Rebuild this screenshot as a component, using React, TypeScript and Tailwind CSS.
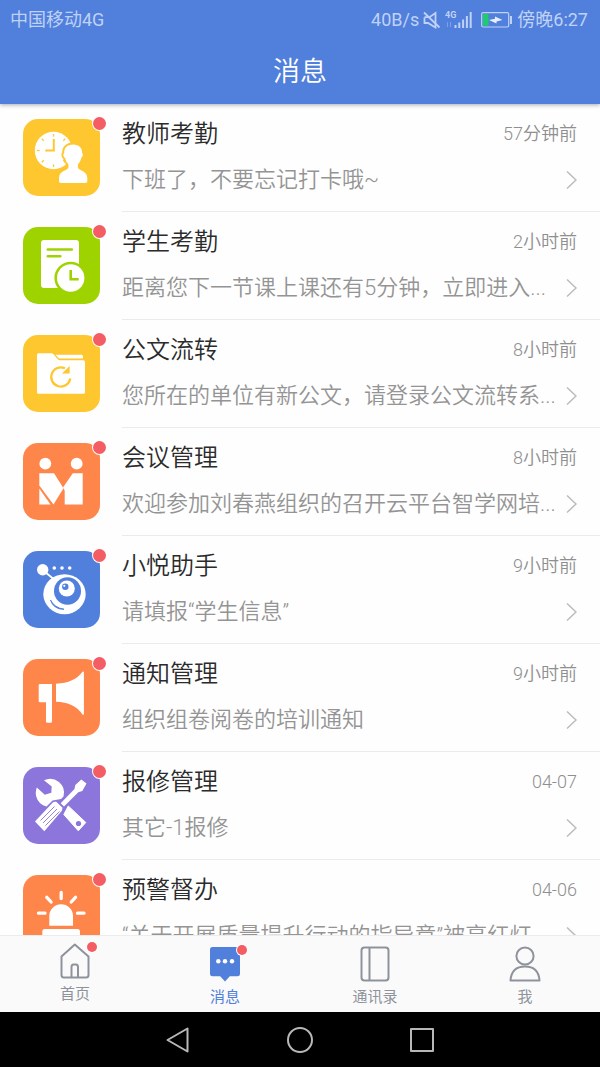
import { useState } from "react";
import type { ReactNode } from "react";

type Message = {
  id: string;
  title: string;
  desc: string;
  time: string;
  color: string;
  icon: ReactNode;
};

const TICKS = [0, 45, 90, 135, 180, 225, 270, 315];

// App icons, all drawn on a 77x77 tile
const TeacherIcon = () => (
  <svg viewBox="0 0 77 77" className="h-full w-full" fill="#fff">
    <circle cx="30.5" cy="31.5" r="18.7" />
    {TICKS.map((a) => (
      <path key={a} d="M30.5 15v2.6" stroke="#fec62f" strokeWidth="1.3" transform={`rotate(${a} 30.5 31.5)`} />
    ))}
    <path d="M30.8 20v11.5h-8.5" fill="none" stroke="#fec62f" strokeWidth="2" />
    <path
      d="M50 25.5c-6 0-9 3.500-8.800 8.500-1.500 1-.8 4 .8 4.800.6 3 1.800 5 3.400 6.500v3.700c-1.500 2.500-9.400 3-9.400 10v3.300c0 1.200.8 1.700 2 1.700h24.300c1.200 0 2-.5 2-1.700V59c0-7-8-7.500-9.400-10v-3.700c1.600-1.500 2.800-3.500 3.400-6.500 1.600-.8 2.200-3.800.8-4.800.2-5-3-8.500-9.100-8.500z"
      stroke="#fec62f"
      strokeWidth="4"
      paintOrder="stroke"
    />
  </svg>
);

const StudentIcon = () => (
  <svg viewBox="0 0 77 77" className="h-full w-full" fill="#fff">
    <rect x="18" y="13" width="38" height="48" rx="3" />
    <path d="M24.800 22.500h24M24.800 29.300h12.500" stroke="#9fd300" strokeWidth="2.600" strokeLinecap="round" />
    <circle cx="47.700" cy="51" r="16.300" fill="#9fd300" />
    <circle cx="47.700" cy="51" r="13.700" />
    <path d="M47.700 43v9.300h8" fill="none" stroke="#9fd300" strokeWidth="2.600" />
  </svg>
);

const DocumentIcon = () => (
  <svg viewBox="0 0 77 77" className="h-full w-full" fill="#fff">
    <path d="M15.500 18.300h13.200q1 0 1.800 1l4.500 5.200q.8.800 2 .8h23.500q1.500 0 1.500 1.500v30.400q0 1.500-1.500 1.500h-45q-1.500 0-1.500-1.500V19.800q0-1.500 1.500-1.500z" />
    <path d="M32.500 19.700h26q1.500 0 1.500 1.500v2.300H36.800q-1 0-1.600-.7z" />
    <path d="M47.300 43.500a9.600 9.600 0 1 1-5.300-10.200" fill="none" stroke="#fec62f" strokeWidth="2.200" />
    <path d="M46.600 31v7.500h-7.600z" fill="#fec62f" />
  </svg>
);

const MeetingIcon = () => (
  <svg viewBox="0 0 77 77" className="h-full w-full" fill="#fff">
    <circle cx="22.300" cy="20.700" r="5.900" />
    <circle cx="53.700" cy="20.700" r="5.900" />
    <path d="M16.300 30.300H31l9.500 15L30.500 61.500 16.300 42.500z" />
    <path d="M16.300 45.500v16h11.200z" />
    <path d="M49.800 30.300h9.900v31.200H41.700V47.500L40 44.500z" />
  </svg>
);

const AssistantIcon = () => (
  <svg viewBox="0 0 77 77" className="h-full w-full" fill="#fff">
    <circle cx="19.700" cy="18.700" r="5.700" />
    <path d="M22 21l8 6.500" stroke="#fff" strokeWidth="1.800" />
    <circle cx="31.300" cy="17" r="1.800" />
    <circle cx="39" cy="17" r="1.800" />
    <circle cx="46.700" cy="17" r="1.800" />
    <ellipse cx="41.500" cy="43.200" rx="21.200" ry="20" />
    <ellipse cx="44.500" cy="40" rx="13.500" ry="13.700" fill="#517fdc" />
    <circle cx="43.800" cy="37.500" r="8" />
    <circle cx="42.300" cy="35.700" r="3.200" fill="#517fdc" />
    <circle cx="41.300" cy="34.800" r="1.100" />
    <path d="M27.500 49q3.500 7.500 13.500 9.300Q30.500 58.500 27.500 49z" fill="#517fdc" stroke="#517fdc" strokeWidth=".9" />
  </svg>
);

const NoticeIcon = () => (
  <svg viewBox="0 0 77 77" className="h-full w-full" fill="#fff">
    <path d="M17 25h12v37.500q0 1.200-1.200 1.200h-3.600q-1.200 0-1.200-1.200V43.300h-6q-1.300 0-1.300-1.300V26.300Q15.700 25 17 25z" />
    <path d="M33 24.700Q51.500 24 59.500 12.800q1.400-1 1.400.8v41.200q0 1.800-1.400.8Q51.500 43 33 42.700z" />
  </svg>
);

const RepairIcon = () => (
  <svg viewBox="0 0 77 77" className="h-full w-full" fill="#fff">
    <path d="M21 13.200A14 14 0 0 1 40.500 29.500L38 32 29.500 33.500 23.500 39.500A14 14 0 0 1 13.800 20.500l8 7.300 6.500-2 .4-6.300z" />
    <path d="M45.300 39l17.500 16.500-7.500 8.300L40.800 47.500z" strokeLinejoin="round" stroke="#fff" />
    <circle cx="55.500" cy="56.500" r="2.600" fill="#8c76dc" />
    <path d="M58.300 12.500l5.200 4-4.200 7.500-4 1.300L41 39.500l-3.300-3.200L51.500 22l.8-4z" />
    <path d="M30 35.300l3-.8 6.500 6.300-.6 3L21.300 64.300 12 54.500z" />
    <path d="M17.500 53.500l14-14M20 56l14-14M22.500 58.500l14-14" stroke="#8c76dc" strokeWidth=".9" />
  </svg>
);

const AlarmIcon = () => (
  <svg viewBox="0 0 77 77" className="h-full w-full" fill="#fff">
    <path d="M26.300 50.700v-9.500a11.800 11.800 0 0 1 23.700 0v9.500z" />
    <rect x="19.300" y="54" width="37.700" height="10" rx="2.500" />
    <path
      d="M38.200 17.500v6M23.800 22.300l4.300 4.700M52.500 22.300l-4.300 4.700M15.500 38.200h6.500M54.500 38.200H61"
      stroke="#fff"
      strokeWidth="3.300"
      strokeLinecap="round"
    />
  </svg>
);

const MESSAGES: Message[] = [
  { id: "teacher", title: "教师考勤", desc: "下班了，不要忘记打卡哦~", time: "57分钟前", color: "bg-[#fec62f]", icon: <TeacherIcon /> },
  { id: "student", title: "学生考勤", desc: "距离您下一节课上课还有5分钟，立即进入...", time: "2小时前", color: "bg-[#9fd300]", icon: <StudentIcon /> },
  { id: "document", title: "公文流转", desc: "您所在的单位有新公文，请登录公文流转系...", time: "8小时前", color: "bg-[#fec62f]", icon: <DocumentIcon /> },
  { id: "meeting", title: "会议管理", desc: "欢迎参加刘春燕组织的召开云平台智学网培...", time: "8小时前", color: "bg-[#ff864a]", icon: <MeetingIcon /> },
  { id: "assistant", title: "小悦助手", desc: "请填报“学生信息”", time: "9小时前", color: "bg-[#517fdc]", icon: <AssistantIcon /> },
  { id: "notice", title: "通知管理", desc: "组织组卷阅卷的培训通知", time: "9小时前", color: "bg-[#ff864a]", icon: <NoticeIcon /> },
  { id: "repair", title: "报修管理", desc: "其它-1报修", time: "04-07", color: "bg-[#8c76dc]", icon: <RepairIcon /> },
  { id: "alarm", title: "预警督办", desc: "“关于开展质量提升行动的指导意”被亮红灯", time: "04-06", color: "bg-[#ff864a]", icon: <AlarmIcon /> },
];

const StatusBar = () => (
  <div className="flex h-10 items-center justify-between pr-3 pl-[10px] text-lg text-[#bfd2f6]">
    <span>中国移动4G</span>
    <div className="flex items-center">
      <span>40B/s</span>
      <svg viewBox="0 0 18 18" className="ml-1 h-[18px] w-[18px]" fill="none" stroke="currentColor" strokeWidth="1.800">
        <path d="M1.500 6.500v5.500h3.500l7.500 4.500V2L6.500 6.200H1.500" />
        <path d="M1 1.500l15.500 15" />
      </svg>
      <svg viewBox="0 0 28 20" className="ml-1 h-5 w-7" fill="currentColor">
        <text x="0" y="8" fontSize="9" fontWeight="700">4G</text>
        <path d="M2.500 12v5M5.500 12v5" stroke="currentColor" strokeWidth="1" opacity=".4" />
        <path d="M9.500 15h2v3h-2zM13.300 12.500h2V18h-2zM17.100 9.500h2V18h-2zM20.900 6h2v12h-2zM24.700 2h2v16h-2z" />
      </svg>
      <svg viewBox="0 0 32 16" className="ml-2 h-4 w-8">
        <rect x=".7" y=".7" width="27" height="14.300" rx="1.500" fill="none" stroke="currentColor" strokeWidth="1.200" />
        <rect x="2" y="2" width="5.500" height="11.700" fill="#1fca70" />
        <path d="M8 8l6-1.300V4.500L21.500 8l-6 1.500v2z" fill="#e8effc" />
        <path d="M30 4v8" stroke="currentColor" strokeWidth="2" />
      </svg>
      <span className="ml-1">傍晚6:27</span>
    </div>
  </div>
);

const MessageRow = ({ item }: { item: Message }) => (
  <li>
    <a href={`#${item.id}`} className="flex pl-[23px]">
      <div className={`relative mt-[15px] h-[77px] w-[77px] shrink-0 rounded-[15px] ${item.color}`}>
        {item.icon}
        <span className="absolute -top-0.5 -right-1.5 h-[13px] w-[13px] rounded-full bg-[#f45d64] ring-1 ring-white" />
      </div>
      <div className="ml-[22px] min-w-0 flex-1 border-b border-[#ebebed] pt-[14px] pr-[23px] pb-[17px]">
        <div className="flex items-center justify-between">
          <h2 className="text-2xl leading-8 font-[350] text-[#2b2b2b]">{item.title}</h2>
          <time className="text-lg leading-8 font-[350] text-[#8f8f8f]">{item.time}</time>
        </div>
        <div className="mt-4 flex items-center justify-between">
          <p className="min-w-0 truncate text-[22px] leading-7 font-[350] text-[#949494]">{item.desc}</p>
          <svg viewBox="0 0 11 20" className="h-5 w-[11px] shrink-0" fill="none" stroke="#bbb" strokeWidth="1.500">
            <path d="M1 1.500l9 8.500-9 8.500" />
          </svg>
        </div>
      </div>
    </a>
  </li>
);

const HomeIcon = () => (
  <svg viewBox="0 0 32 36" className="h-9 w-8" fill="none" stroke="currentColor" strokeWidth="2" strokeLinejoin="round">
    <path d="M15.800 1.500L2.500 13.500V32q0 2.500 2.500 2.500h22q2.500 0 2.500-2.500V13.500z" />
    <path d="M12.500 34V24q0-2.500 2-2.500h2.500q2 0 2 2.500v10" />
  </svg>
);

const ChatIcon = () => (
  <svg viewBox="0 0 32 36" className="h-9 w-8" fill="currentColor">
    <path d="M3.500 1h25q2.500 0 2.500 2.500V28q0 2.300-2.500 2.300h-7.700L16 35.500l-4.800-5.200H3.500Q1 30.300 1 28V3.500Q1 1 3.500 1z" />
    <g fill="#fff">
      <circle cx="9.300" cy="15.300" r="2.200" />
      <circle cx="16" cy="15.300" r="2.200" />
      <circle cx="23" cy="15.300" r="2.200" />
    </g>
  </svg>
);

const ContactsIcon = () => (
  <svg viewBox="0 0 32 36" className="h-9 w-8" fill="none" stroke="currentColor" strokeWidth="2">
    <rect x="2.500" y="1.500" width="27" height="33" rx="3" />
    <path d="M10.500 1.500v33" />
  </svg>
);

const MeIcon = () => (
  <svg viewBox="0 0 32 36" className="h-9 w-8" fill="none" stroke="currentColor" strokeWidth="2" strokeLinejoin="round">
    <circle cx="16" cy="10" r="8.600" />
    <path d="M1.500 34.500Q2.500 20.500 16 20.500t14.500 14z" />
  </svg>
);

const TABS = [
  { key: "home", label: "首页", icon: <HomeIcon />, dot: true, pad: "pt-[7px]" },
  { key: "message", label: "消息", icon: <ChatIcon />, dot: true, pad: "pt-[10px]" },
  { key: "contacts", label: "通讯录", icon: <ContactsIcon />, dot: false, pad: "pt-[10px]" },
  { key: "me", label: "我", icon: <MeIcon />, dot: false, pad: "pt-[10px]" },
];

export default function App() {
  const [active, setActive] = useState("message");

  return (
    <div className="flex h-screen flex-col overflow-hidden bg-[#fefefe] font-['Roboto','Noto_Sans_CJK_SC',sans-serif]">
      <header className="z-10 bg-[#517fdc] shadow-[0_1px_4px_rgba(60,60,90,0.45)]">
        <StatusBar />
        <h1 className="h-16 text-center text-[27px] leading-[64px] font-[350] text-white">消息</h1>
      </header>

      <main className="min-h-0 flex-1 overflow-hidden">
        <ul>
          {MESSAGES.map((item) => (
            <MessageRow key={item.id} item={item} />
          ))}
        </ul>
      </main>

      {/* Bottom tabs */}
      <nav className="grid h-[77px] shrink-0 grid-cols-4 border-t border-[#ececee] bg-[#fafafa]">
        {TABS.map((tab) => (
          <button
            key={tab.key}
            type="button"
            onClick={() => setActive(tab.key)}
            className={`flex flex-col items-center ${tab.pad} ${active === tab.key ? "text-[#517fdc]" : "text-[#8e939b]"}`}
          >
            <span className="relative">
              {tab.icon}
              {tab.dot && (
                <span className="absolute -top-px -right-1.5 h-[10px] w-[10px] rounded-full bg-[#f45d64] ring-1 ring-white" />
              )}
            </span>
            <span className="mt-[5px] text-[15px] leading-5">{tab.label}</span>
          </button>
        ))}
      </nav>

      {/* System navigation */}
      <div className="flex h-[55px] shrink-0 items-center justify-center gap-[94px] bg-black text-[#b8b8b8]">
        <button type="button" aria-label="返回">
          <svg viewBox="0 0 28 28" className="h-7 w-7" fill="none" stroke="currentColor" strokeWidth="2" strokeLinejoin="round">
            <path d="M23.500 2.500v23L3.500 14z" />
          </svg>
        </button>
        <button type="button" aria-label="主页">
          <svg viewBox="0 0 28 28" className="h-7 w-7" fill="none" stroke="currentColor" strokeWidth="2">
            <circle cx="14" cy="14" r="12" />
          </svg>
        </button>
        <button type="button" aria-label="最近任务">
          <svg viewBox="0 0 28 28" className="h-7 w-7" fill="none" stroke="currentColor" strokeWidth="2" strokeLinejoin="round">
            <rect x="3" y="3" width="22" height="22" />
          </svg>
        </button>
      </div>
    </div>
  );
}
